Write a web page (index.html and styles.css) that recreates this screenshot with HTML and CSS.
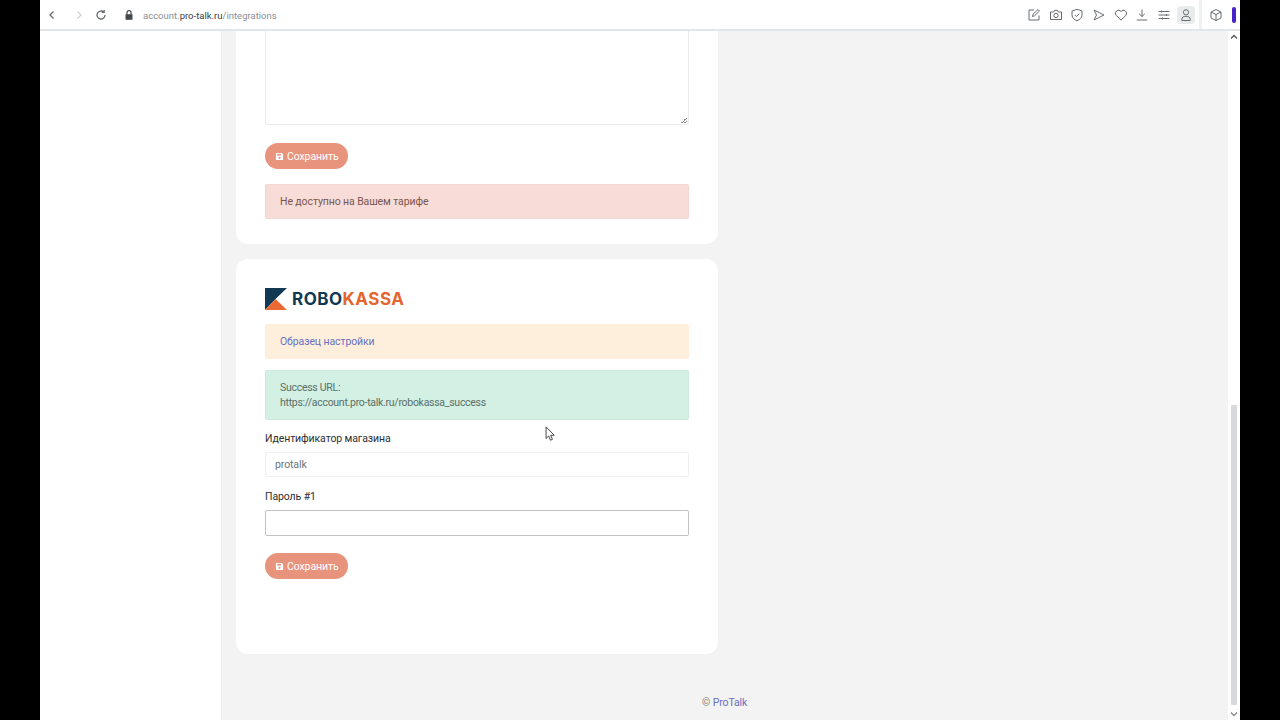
FILE: index.html
```html
<!DOCTYPE html>
<html lang="ru">
<head>
<meta charset="utf-8">
<title>Интеграции</title>
<link rel="stylesheet" href="styles.css">
</head>
<body>
<div class="frame">
  <header class="toolbar">
    <div class="address">
      <svg class="ic nav" viewBox="0 0 12 12"><path d="M7.500 2.500 4 6l3.500 3.500"/></svg>
      <svg class="ic nav off" viewBox="0 0 12 12"><path d="M4.500 2.500 8 6l-3.500 3.500"/></svg>
      <svg class="ic nav reload" viewBox="0 0 12 12"><path d="M10 6a4 4 0 1 1-1.200-2.850M9.200 1v2.400H6.800"/></svg>
      <svg class="lock" viewBox="0 0 12 12"><path class="lock-body" d="M2.500 5.200h7v5.600h-7z"/><path class="lock-arc" d="M4 5.200V3.600a2 2 0 0 1 4 0v1.600"/></svg>
      <span class="url">account.<b>pro-talk.ru</b>/integrations</span>
    </div>
    <div class="tools">
      <svg class="ic" viewBox="0 0 14 14"><path d="M12 7.500V12H2V2h5M5.500 8.500 6 6.300 11 1.500l1.500 1.500-5 4.800z"/></svg>
      <svg class="ic" viewBox="0 0 14 14"><path d="M1.500 4h3l1-1.700h3L9.500 4h3v7.500h-11z"/><circle cx="7" cy="7.500" r="2.200"/></svg>
      <svg class="ic" viewBox="0 0 14 14"><path d="M7 1.300 12 3v4c0 3-2.300 4.700-5 5.700C4.300 11.700 2 10 2 7V3zM4.800 7l1.600 1.600 3-3"/></svg>
      <svg class="ic" viewBox="0 0 14 14"><path d="M2 2l10 5-10 5 2.500-5z"/></svg>
      <svg class="ic" viewBox="0 0 14 14"><path d="M7 12.200 2 7.200a3 3 0 0 1 5-3.700 3 3 0 0 1 5 3.700z"/></svg>
      <svg class="ic" viewBox="0 0 14 14"><path d="M7 1.500v7M4.200 5.800 7 8.500l2.800-2.700M1.800 12h10.400"/></svg>
      <svg class="ic" viewBox="0 0 14 14"><path d="M1.500 3.500h11M1.500 7h11M1.500 10.500h11M4.500 2.500v2M9.500 6v2M5.500 9.500v2"/></svg>
      <span class="profile"><svg class="ic" viewBox="0 0 14 14"><circle cx="7" cy="4.300" r="2.600"/><path d="M2.800 12.500v-1.200c0-2 1.500-3 4.200-3s4.200 1 4.200 3v1.200z"/></svg></span>
    </div>
    <div class="ext">
      <svg class="ic" viewBox="0 0 14 14"><path d="M7 1.500 12 4v6l-5 2.500L2 10V4zM2 4l5 2.500L12 4M7 6.500v6"/></svg>
      <span class="ext-bar"></span>
    </div>
  </header>
  <div class="viewport">
    <aside class="sidebar"></aside>
    <main class="main">
      <div class="column">
        <section class="card first">
          <div class="textarea"></div>
          <button class="btn"><svg class="save" viewBox="0 0 10 10"><path d="M1 1h6.500L9 2.500V9H1z"/><rect class="save-slot" x="2.500" y="2" width="4" height="2"/><circle class="save-slot" cx="5" cy="6.500" r="1.200"/></svg>Сохранить</button>
          <div class="alert danger">Не доступно на Вашем тарифе</div>
        </section>
        <section class="card second">
          <div class="logo">
            <svg class="logo-mark" viewBox="0 0 22 22"><path class="navy" d="M0 0h22L10.500 11 0 22z"/><path class="orange" d="M10.500 11 22 22H0z"/></svg>
            <span class="logo-text">ROBO<span class="logo-accent">KASSA</span></span>
          </div>
          <div class="alert warning"><a href="#">Образец настройки</a></div>
          <div class="alert success">Success URL:<br>https://account.pro-talk.ru/robokassa_success</div>
          <label class="label">Идентификатор магазина</label>
          <div class="input soft">protalk</div>
          <label class="label second-label">Пароль #1</label>
          <div class="input focus"></div>
          <button class="btn lower"><svg class="save" viewBox="0 0 10 10"><path d="M1 1h6.500L9 2.500V9H1z"/><rect class="save-slot" x="2.500" y="2" width="4" height="2"/><circle class="save-slot" cx="5" cy="6.500" r="1.200"/></svg>Сохранить</button>
        </section>
      </div>
      <footer class="footer">© <a href="#">ProTalk</a></footer>
      <svg class="cursor" viewBox="0 0 12 18"><path d="M1 1v13l3-2.800 2 4.800 2.200-1-2-4.600h4z"/></svg>
    </main>
    <div class="scrollbar">
      <svg class="arrow" viewBox="0 0 8 6"><path d="M1 4.500 4 1.500l3 3"/></svg>
      <div class="track"><div class="thumb"></div></div>
      <svg class="arrow down" viewBox="0 0 8 6"><path d="M1 1.500 4 4.500l3-3"/></svg>
    </div>
  </div>
</div>
</body>
</html>
```
FILE: styles.css
```css
* { box-sizing: border-box; }
html, body { margin: 0; height: 100%; background: #000; overflow: hidden; }
body { font-family: "Roboto", "Noto Sans", sans-serif; font-size: 10.500px; letter-spacing: -0.100px; color: #6b6f72; }
.frame { width: 1200px; height: 720px; margin: 0 40px; display: flex; flex-direction: column; background: #fff; }

.toolbar { height: 31px; flex: none; display: flex; align-items: center; background: #fff; border-bottom: 2px solid #e3e6e8; position: relative; z-index: 2; }
.address { width: 985px; display: flex; align-items: center; padding-left: 6px; }
.ic { width: 14px; height: 14px; fill: none; stroke: #666c70; stroke-width: 1; flex: none; }
.nav { width: 12px; height: 12px; margin-right: 15px; stroke-width: 1.300; }
.nav.off { stroke: #d0d3d5; margin-right: 10px; }
.nav.reload { margin-right: 16px; }
.lock { width: 12px; height: 12px; margin: 0 8px 0 0; flex: none; fill: none; }
.lock-body { fill: #43484c; }
.lock-arc { stroke: #43484c; stroke-width: 1.200; }
.url { font-size: 9.500px; letter-spacing: 0; color: #8a8f93; padding-top: 1px; }
.url b { font-weight: 400; color: #3c4044; }
.tools { display: flex; align-items: center; gap: 7.700px; width: 171px; padding-left: 2px; }
.profile { width: 18px; height: 18px; margin-left: -2px; margin-right: -2px; display: flex; align-items: center; justify-content: center; background: #e8eced; border-radius: 4px; }
.ext { flex: 1; height: 29px; display: flex; align-items: center; gap: 9px; padding-left: 7px; border-left: 3px solid #eef0f1; margin-left: 3px; }
.ext-bar { width: 4px; height: 16px; background: #4a22c8; border-radius: 2px; }

.viewport { flex: 1; min-height: 0; display: flex; }
.sidebar { width: 182px; flex: none; background: #fff; border-right: 1px solid #ececec; }
.main { flex: 1; min-width: 0; background: #f3f3f3; position: relative; overflow: hidden; padding-left: 14px; }
.column { width: 482px; margin-top: -41px; display: flex; flex-direction: column; gap: 15px; }
.card { background: #fff; border-radius: 12px; padding: 0 29px; }
.first { height: 254px; }
.second { height: 395px; padding-top: 29px; }
.textarea { height: 135px; margin-bottom: 18px; background: #fff; border: 1px solid #e9ebec; border-top: 0; border-radius: 0 0 3px 3px; position: relative; }
.textarea::after { content: ""; position: absolute; right: 1px; bottom: 1px; width: 6px; height: 6px; background: linear-gradient(135deg, transparent 50%, #8a8a8a 50%, #8a8a8a 60%, transparent 60%, transparent 75%, #8a8a8a 75%, #8a8a8a 85%, transparent 85%); }
.btn { width: 83px; height: 26px; display: flex; align-items: center; gap: 3px; padding: 0 0 0 10px; border: 0; border-radius: 13px; background: #e8937c; color: #fff; font: 10.500px "Roboto", sans-serif; letter-spacing: -0.100px; }
.save { width: 9px; height: 9px; flex: none; fill: #fff; }
.save-slot { fill: #e8937c; }
.alert { border: 1px solid transparent; border-radius: 2px; padding: 9px 14px 7px; line-height: 15px; }
.first .alert { margin-top: 15px; height: 35px; }
.danger { background: #f8dcd7; border-color: #f5d6d0; color: #7a5650; }
.warning { background: #feefdc; border-color: #feeedb; height: 35px; margin-top: 14px; }
.warning a, .footer a { color: #6a6fc0; text-decoration: none; }
.success { background: #d3f0e4; border-color: #cdeadf; color: #5a6f66; height: 50px; margin-top: 11px; letter-spacing: -0.280px; }
.logo { height: 22px; display: flex; align-items: center; gap: 5px; }
.logo-mark { width: 22px; height: 22px; flex: none; }
.navy { fill: #113a52; }
.orange { fill: #ea6a36; }
.logo-text { font-family: "Inter", sans-serif; font-weight: 700; font-size: 17px; letter-spacing: 0.500px; color: #113a52; }
.logo-accent { color: #e4652f; }
.label { display: block; margin-top: 11px; line-height: 15px; color: #2c2f33; }
.second-label { margin-top: 12px; }
.input { height: 25px; margin-top: 6px; padding: 0 9px; line-height: 24px; background: #fff; border: 1px solid #edf0f0; border-radius: 2px; color: #6f7377; }
.input.focus { height: 26px; border-color: #c2c2c2; }
.lower { margin-top: 17px; }
.footer { position: absolute; left: 480px; top: 664px; line-height: 15px; color: #77797c; }
.cursor { position: absolute; left: 323px; top: 395px; width: 11px; height: 16px; fill: #fff; stroke: #333; stroke-width: 1; }

.scrollbar { width: 12px; flex: none; background: #fff; display: flex; flex-direction: column; align-items: center; }
.arrow { width: 8px; height: 6px; flex: none; margin: 3px 0; fill: none; stroke: #555; stroke-width: 1.300; }
.arrow.down { stroke: #8a8a8a; }
.track { flex: 1; width: 6px; padding-top: 362px; padding-bottom: 3px; }
.thumb { height: 100%; background: #d6dadb; border-radius: 1px; }
```
